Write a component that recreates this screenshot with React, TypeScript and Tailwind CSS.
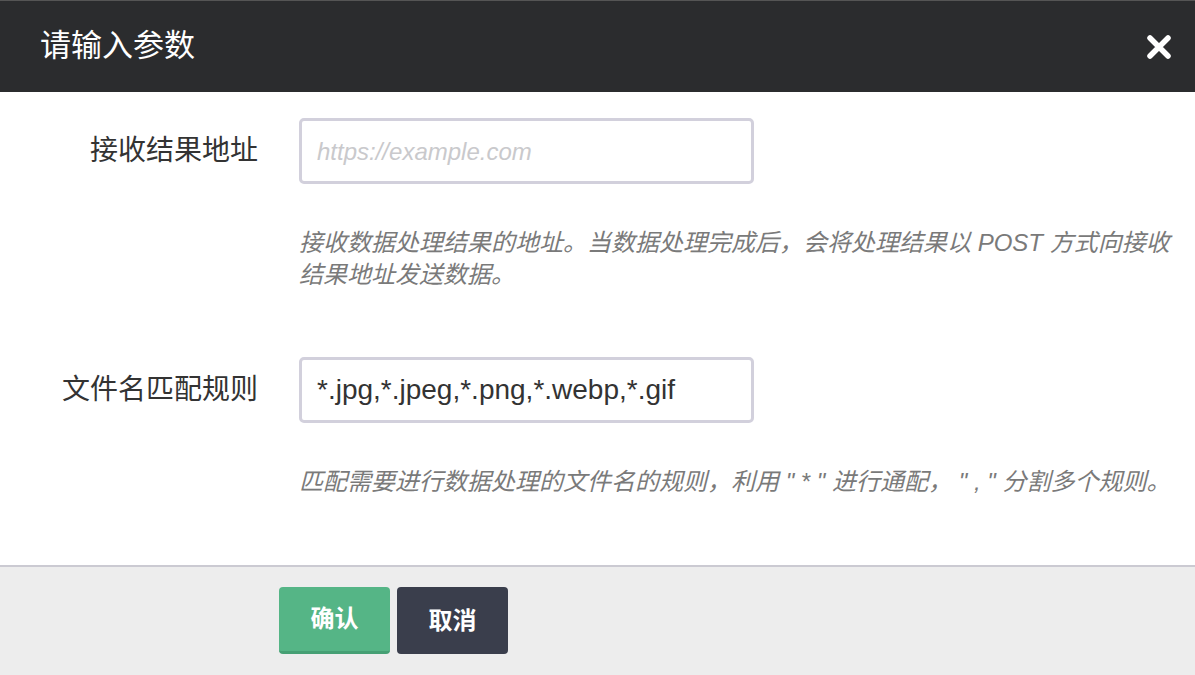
import React from 'react';

const font = { fontFamily: '"Liberation Sans", "Noto Sans CJK SC", sans-serif' };

const Field: React.FC<{ label: string; value?: string; placeholder?: string; help: string }> = ({
  label,
  value,
  placeholder,
  help,
}) => (
  <div className="grid grid-cols-[258px_1fr] gap-x-[41px] pb-[66px]">
    <label className="h-[66px] flex items-center justify-end text-[28px] text-[#333]">{label}</label>
    <div>
      <input
        className="w-[455px] h-[66px] border-[3px] border-[#d2d0dc] rounded-[5px] px-[15px] text-[28px] text-[#333] outline-none placeholder:text-[#c9c9cc] placeholder:italic placeholder:text-[24px]"
        style={font}
        defaultValue={value}
        placeholder={placeholder}
      />
      <p className="mt-[43px] pr-[18px] text-[24px] leading-[32px] italic text-[#7a7a7a]">{help}</p>
    </div>
  </div>
);

const App: React.FC = () => {
  return (
    <div className="w-[1195px] h-[675px] bg-white flex flex-col overflow-hidden" style={font}>
      {/* Header */}
      <div className="h-[92px] shrink-0 bg-[#2b2c2e] border-t border-[#555] flex items-center justify-between pl-[40px] pr-[23px]">
        <h1 className="text-[31px] text-white">请输入参数</h1>
        <svg width="26" height="26" viewBox="0 0 26 26" className="text-white">
          <path d="M4 4 L22 22 M22 4 L4 22" stroke="currentColor" strokeWidth="5.5" strokeLinecap="round" />
        </svg>
      </div>

      {/* Body */}
      <div className="flex-1 pt-[26px]">
        <Field
          label="接收结果地址"
          placeholder="https://example.com"
          help="接收数据处理结果的地址。当数据处理完成后，会将处理结果以 POST 方式向接收结果地址发送数据。"
        />
        <Field
          label="文件名匹配规则"
          value="*.jpg,*.jpeg,*.png,*.webp,*.gif"
          help={'匹配需要进行数据处理的文件名的规则，利用 " * " 进行通配， " , " 分割多个规则。'}
        />
      </div>

      {/* Footer */}
      <div className="h-[110px] shrink-0 bg-[#ededed] border-t-2 border-[#cbcad2] flex items-start gap-[7px] pl-[279px] pt-[20px]">
        <button className="w-[111px] h-[67px] rounded-[4px] bg-[#55b586] border-b-[3px] border-[#46a074] text-white text-[24px] font-bold">
          确认
        </button>
        <button className="w-[111px] h-[67px] rounded-[4px] bg-[#3a3e4c] text-white text-[24px] font-bold">
          取消
        </button>
      </div>
    </div>
  );
};

export default App;
